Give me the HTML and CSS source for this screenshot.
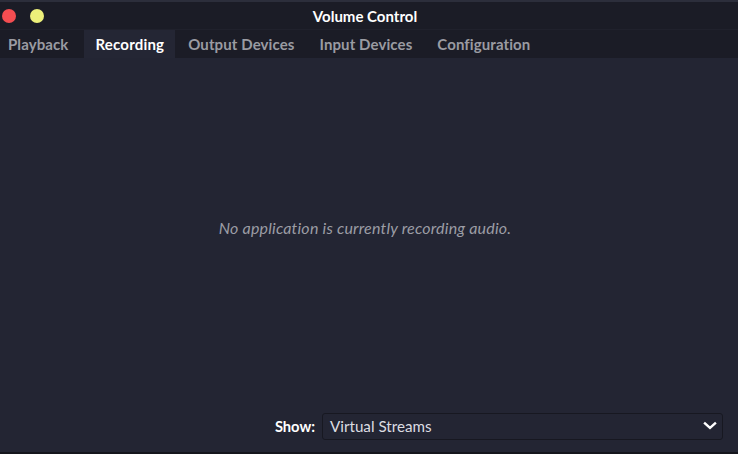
FILE: index.html
```html
<!DOCTYPE html>
<html>
<head>
<meta charset="utf-8">
<link rel="stylesheet" href="styles.css">
</head>
<body>
<div class="window">
  <div class="titlebar">
    <div class="lights">
      <span class="light red"></span>
      <span class="light yellow"></span>
    </div>
    <div class="title">Volume Control</div>
  </div>
  <div class="tabs">
    <div class="tab">Playback</div>
    <div class="tab active">Recording</div>
    <div class="tab">Output Devices</div>
    <div class="tab">Input Devices</div>
    <div class="tab">Configuration</div>
  </div>
  <div class="content">
    <div class="empty">No application is currently recording audio.</div>
    <div class="footer">
      <span class="show-label">Show:</span>
      <div class="combo">
        <span>Virtual Streams</span>
        <svg class="chev" width="14" height="10" viewBox="0 0 14 10"><path d="M2 2.5 L7 7 L12 2.5" fill="none" stroke="#ffffff" stroke-width="2.4" stroke-linecap="square"/></svg>
      </div>
    </div>
  </div>
  <div class="bottom-edge"></div>
</div>
</body>
</html>
```

FILE: styles.css
```css
html, body {
  margin: 0;
  padding: 0;
  width: 738px;
  height: 454px;
  overflow: hidden;
  background: #1b1c26;
}
.window {
  width: 738px;
  height: 454px;
  display: flex;
  flex-direction: column;
  font-family: "Lato", "Open Sans", sans-serif;
  background: #1b1c26;
  border-top: 2px solid #2c2e3b;
  box-sizing: border-box;
}
.titlebar {
  height: 27px;
  display: flex;
  align-items: center;
  position: relative;
  border-bottom: 1px solid #20212c;
}
.lights {
  display: flex;
  gap: 14px;
  padding-left: 2px;
}
.light {
  width: 14px;
  height: 14px;
  border-radius: 50%;
  display: block;
}
.red { background: #f44d51; }
.yellow { background: #edf07a; }
.title {
  position: absolute;
  left: 0;
  right: 0;
  top: 0;
  bottom: 0;
  display: flex;
  align-items: center;
  justify-content: center;
  color: #ffffff;
  font-weight: 700;
  font-size: 15px;
  padding-right: 8px;
}
.tabs {
  height: 28px;
  display: flex;
  align-items: stretch;
}
.tab {
  display: flex;
  align-items: center;
  padding: 0 12px 0 13px;
  color: #9a9ba2;
  font-weight: 700;
  font-size: 15px;
  letter-spacing: 0.1px;
}
.tab:first-child { padding-left: 8px; padding-right: 16px; }
.tab.active {
  padding-left: 11px;
  padding-right: 11px;
  letter-spacing: 0.2px;
  background: #242634;
  color: #ffffff;
}
.content {
  flex: 1;
  background: #232533;
  display: flex;
  flex-direction: column;
}
.empty {
  flex: 1;
  display: flex;
  align-items: center;
  justify-content: center;
  font-style: italic;
  color: #9c9da5;
  font-size: 16px;
  letter-spacing: 0.2px;
  padding-bottom: 4px;
  padding-right: 8px;
}
.footer {
  height: 52px;
  display: flex;
  align-items: flex-start;
  justify-content: flex-end;
  padding: 13px 15px 0 0;
  box-sizing: border-box;
  gap: 7px;
}
.show-label {
  color: #ffffff;
  font-weight: 700;
  font-size: 14.7px;
  line-height: 26px;
}
.combo {
  width: 401px;
  height: 27px;
  box-sizing: border-box;
  border: 1px solid #171821;
  border-radius: 3px;
  display: flex;
  align-items: center;
  justify-content: space-between;
  padding: 0 5px 1px 7px;
  color: #dcdde2;
  font-size: 15.2px;
}
.chev { display: block; }
.bottom-edge {
  height: 2px;
  background: #15161d;
}
```
